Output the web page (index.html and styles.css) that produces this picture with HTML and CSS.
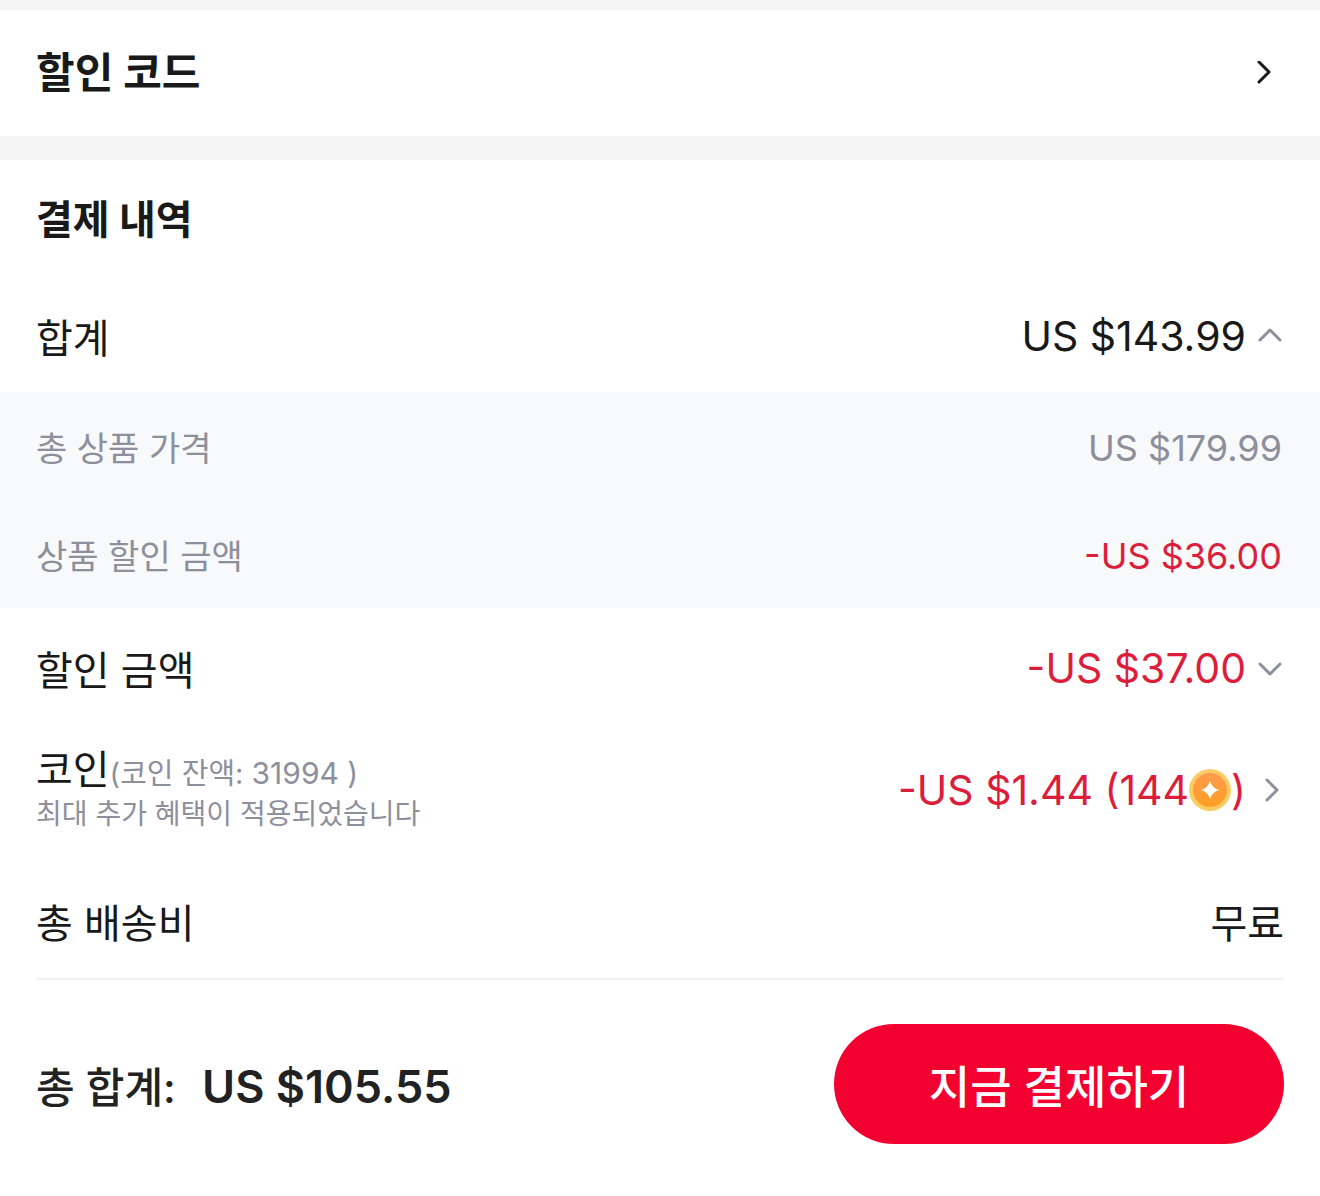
FILE: index.html
```html
<!DOCTYPE html>
<html lang="ko">
  <head>
    <meta charset="utf-8">
    <meta name="viewport" content="width=device-width, initial-scale=1">
    <link rel="stylesheet" href="styles.css">
    <title>결제 내역</title>
  </head>
  <body>
    <section class="promo">
      <a class="promo-link" href="#">
        <h2>할인 코드</h2>
        <svg class="promo-arrow" viewBox="0 0 16 24"><path d="M3 1l10 10L3 21" /></svg>
      </a>
    </section>

    <section class="summary">
      <h2 class="summary-title">결제 내역</h2>

      <div class="row">
        <span>합계</span>
        <button class="value">
          US $143.99
          <svg class="chevron" viewBox="0 0 24 24"><path d="M2 16L12 6l10 10" /></svg>
        </button>
      </div>

      <div class="details">
        <div class="row small">
          <span>총 상품 가격</span>
          <span class="price">US $179.99</span>
        </div>
        <div class="row small">
          <span>상품 할인 금액</span>
          <span class="price red">-US $36.00</span>
        </div>
      </div>

      <div class="row discount">
        <span>할인 금액</span>
        <button class="value red">
          -US $37.00
          <svg class="chevron" viewBox="0 0 24 24"><path d="M2 8l10 10L22 8" /></svg>
        </button>
      </div>

      <div class="row coins">
        <div>
          <p class="coins-name">코인<span class="note">(코인 잔액: <span class="balance">31994 )</span></span></p>
          <p class="note">최대 추가 혜택이 적용되었습니다</p>
        </div>
        <button class="value red">
          <span class="coins-amount">-US $1.44 (144<svg class="coin" viewBox="0 0 42 42">
            <defs>
              <linearGradient id="gold" x1="0" y1="0" x2="0" y2="1">
                <stop offset="0" stop-color="#ff9a4e" />
                <stop offset="1" stop-color="#ff9f22" />
              </linearGradient>
            </defs>
            <circle cx="21" cy="21" r="21" fill="#fbcc66" />
            <circle cx="21" cy="21" r="17" fill="url(#gold)" />
            <path d="M21 12q2 7 9 9q-7 2-9 9q-2-7-9-9q7-2 9-9z" fill="#fff" />
          </svg>)</span>
          <svg class="chevron" viewBox="0 0 24 24"><path d="M9 2l10 10L9 22" /></svg>
        </button>
      </div>

      <div class="row shipping">
        <span>총 배송비</span>
        <span>무료</span>
      </div>
    </section>

    <footer class="checkout">
      <p class="total">총 합계: <span>US $105.55</span></p>
      <button class="pay">지금 결제하기</button>
    </footer>
  </body>
</html>
```
FILE: styles.css
```css
* {
  box-sizing: border-box;
}

body {
  margin: 0;
  background: #fff;
  color: #191919;
  font-family: Inter, "Noto Sans CJK KR", sans-serif;
  font-size: 40px;
}

h2,
p {
  margin: 0;
}

h2 {
  font-size: 42px;
  line-height: 60px;
}

button {
  border: 0;
  padding: 0;
  background: none;
  color: inherit;
  font: inherit;
  cursor: pointer;
}

svg {
  fill: none;
  stroke-linecap: round;
  stroke-linejoin: round;
}

.promo {
  border-top: 10px solid #f5f5f5;
  border-bottom: 24px solid #f5f5f5;
}

.promo-link {
  display: flex;
  justify-content: space-between;
  align-items: center;
  height: 126px;
  padding: 0 48px 0 36px;
  color: inherit;
  text-decoration: none;
}

.promo-arrow {
  width: 16px;
  height: 24px;
  stroke: #191919;
  stroke-width: 3;
}

.summary-title {
  padding: 30px 36px;
  font-size: 40px;
}

.row {
  display: flex;
  justify-content: space-between;
  align-items: center;
  height: 112px;
  padding: 0 38px 0 36px;
}

.row.small {
  height: 108px;
  color: #8e8f9d;
  font-size: 34px;
}

.row .price {
  padding-top: 4px;
  font-size: 36px;
}

.details {
  background: #f8f9fb;
}

.row.discount {
  height: 120px;
}

.value {
  display: flex;
  align-items: center;
  gap: 12px;
}

.row .value {
  font-size: 41px;
}

.row .red {
  color: #dc1e3c;
}

.chevron {
  width: 24px;
  height: 24px;
  stroke: #8e8f9d;
  stroke-width: 3;
}

.row.coins {
  height: 124px;
}

.coins-name {
  line-height: 48px;
}

.note {
  color: #8e8f9d;
  font-size: 28px;
  line-height: 40px;
}

.coins-name .note {
  font-size: 29px;
}

.note .balance {
  font-size: 30px;
}

.coins-amount {
  display: flex;
  align-items: center;
}

.coin {
  width: 42px;
  height: 42px;
}

.row.shipping {
  height: 116px;
  margin: 12px 36px 0;
  padding: 0;
  border-bottom: 2px solid #f2f2f2;
}

.checkout {
  display: flex;
  justify-content: space-between;
  align-items: center;
  padding: 44px 36px 52px;
}

.total {
  color: #222;
  font-size: 42px;
  font-weight: 500;
}

.total span {
  margin-left: 15px;
  font-size: 45px;
  font-weight: 600;
}

.pay {
  width: 450px;
  height: 120px;
  border-radius: 60px;
  background: #f2002f;
  color: #fff;
  font-size: 45px;
  font-weight: 500;
}
```
